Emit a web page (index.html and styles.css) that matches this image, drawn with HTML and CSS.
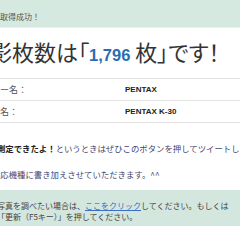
FILE: index.html
```html
<!DOCTYPE html>
<html lang="ja">
<head>
    <meta charset="UTF-8">
    <title>撮影枚数チェック</title>
    <link rel="stylesheet" href="styles.css">
</head>
<body>

<div class="page">
    <!-- 取得結果 -->
    <div class="notice">撮影枚数取得成功！</div>

    <h1 class="result">撮影枚数は「<span class="count">1,796</span> 枚」です！</h1>

    <table class="camera-info">
        <tr>
            <th>メーカー名：</th>
            <td>PENTAX</td>
        </tr>
        <tr>
            <th>機種名：</th>
            <td>PENTAX K-30</td>
        </tr>
    </table>

    <p class="tweet"><span class="tweet-strong">測定できたよ！</span>というときはぜひこのボタンを押してツイートしてください。</p>
    <p class="tweet-note">対応機種に書き加えさせていただきます。^^</p>

    <div class="help-box">
        写真を調べたい場合は、<a href="#">ここをクリック</a>してください。もしくは<br>
        「更新（F5キー）」を押してください。
    </div>
</div>

</body>
</html>
```

FILE: styles.css
```css
body {
    margin: 0;
    font-family: "Noto Sans CJK JP", sans-serif;
    color: #333;
    background: #fff;
    overflow: hidden;
}

.page {
    margin-left: -120px;
    width: 600px;
}

.notice {
    height: 28px;
    padding: 11px 0 0 88px;
    box-sizing: border-box;
    background: #d5e9e0;
    border-bottom: 1px solid #e8f2ed;
    font-size: 8px;
    line-height: 12px;
    color: #555;
}

.result {
    margin: 10px 0 0 0;
    padding-left: 88px;
    font-size: 22px;
    line-height: 26px;
    font-weight: normal;
    font-feature-settings: "palt";
    color: #333;
}

.count {
    font-family: "Liberation Sans", Arial, sans-serif;
    font-weight: bold;
    font-size: 16.5px;
    color: #2a6db5;
}

.camera-info {
    width: 100%;
    margin-top: 10px;
    border-collapse: collapse;
}

.camera-info th,
.camera-info td {
    height: 21px;
    padding: 0;
    border-top: 1px solid #e2e2e2;
    border-bottom: 1px solid #e2e2e2;
}

.camera-info th {
    width: 240px;
    font-size: 9px;
    font-weight: normal;
    text-align: center;
    color: #555;
}

.camera-info td {
    padding-left: 5px;
    font-family: "Liberation Sans", Arial, sans-serif;
    font-size: 8px;
    font-weight: bold;
    text-align: left;
    color: #222;
}

.tweet,
.tweet-note {
    margin: 18px 0 0 0;
    padding-left: 117px;
    font-size: 8.4px;
    line-height: 14px;
    white-space: nowrap;
    color: #46466e;
}

.tweet-note {
    margin-top: 12px;
    padding-left: 112px;
}

.tweet-strong {
    font-weight: bold;
    color: #222;
}

.help-box {
    margin-top: 9px;
    padding: 10px 0 4px 117px;
    background: #d3e7df;
    font-size: 8px;
    line-height: 11px;
    color: #444;
}

.help-box a {
    color: #3b6fc4;
}
```
